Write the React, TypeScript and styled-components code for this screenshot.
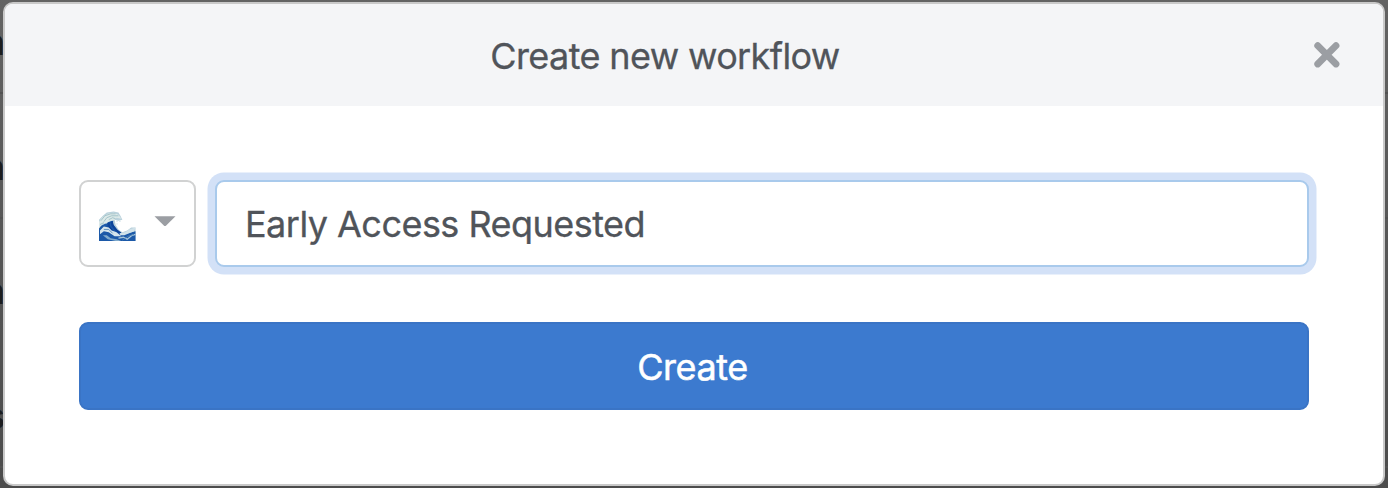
import React from "react";
import styled, { createGlobalStyle } from "styled-components";

const GlobalStyle = createGlobalStyle`
  * { box-sizing: border-box; }
  body { margin: 0; background: #5a5a5a; overflow: hidden; }
  body, button, input { font-family: Inter, "Liberation Sans", sans-serif; }
`;

const Page = styled.div`
  display: grid;
  grid-template: 488px / 1388px;
  background: linear-gradient(#636363, #565656 50%, #4c4c4c);
  overflow: hidden;
`;

const Backdrop = styled.div`
  grid-area: 1 / 1;
  display: flex;
  flex-direction: column;
  overflow: hidden;
`;

const BackdropRow = styled.div`
  flex: none;
  height: 124.5px;
  padding: 20px 0 0;
  background: linear-gradient(transparent 92px, #525252 92px, #525252 94px, transparent 94px);
`;

const BackdropLabel = styled.div`
  display: flex;
  justify-content: flex-end;
  width: 5px;
  overflow: hidden;
  color: #1c1d1f;
  font-size: 36px;
  font-weight: 600;
  line-height: 44px;
`;

const Dialog = styled.section`
  grid-area: 1 / 1;
  z-index: 1;
  display: flex;
  flex-direction: column;
  margin: 2px 3px 2px 3px;
  border: 2px solid #c9c9c9;
  border-radius: 10px;
  background: #fff;
  overflow: hidden;
`;

const Header = styled.header`
  display: flex;
  align-items: center;
  height: 102px;
  padding: 0 42px 0 0;
  background: #f4f5f7;
`;

const Title = styled.h1`
  flex: 1;
  margin: 0;
  padding: 2px 0 0 12px;
  color: #50545a;
  font-size: 36px;
  font-weight: 400;
  line-height: 44px;
  letter-spacing: -0.63px;
  text-align: center;
  -webkit-text-stroke: 0.3px currentColor;
`;

const CloseButton = styled.button`
  display: flex;
  padding: 0;
  border: 0;
  background: none;
`;

const Form = styled.form`
  display: flex;
  flex-direction: column;
  gap: 55px;
  padding: 74px 74px 0;
`;

const Fields = styled.div`
  display: flex;
  gap: 19px;
`;

const EmojiPicker = styled.button`
  display: flex;
  align-items: center;
  gap: 18px;
  width: 117px;
  height: 87px;
  padding: 5px 18px 0;
  border: 2px solid #d1d2d2;
  border-radius: 9px;
  background: #fff;
`;

const CaretWrap = styled.span`
  display: flex;
  margin-top: -10px;
`;

const NameInput = styled.input`
  flex: 1;
  min-width: 0;
  height: 87px;
  padding: 0 28px;
  border: 2px solid #a9caec;
  border-radius: 9px;
  outline: none;
  box-shadow: 0 0 0 7.5px #d3e1f7;
  color: #50545a;
  font-size: 36px;
  letter-spacing: -0.53px;
  -webkit-text-stroke: 0.3px currentColor;
`;

const SubmitButton = styled.button`
  height: 88px;
  padding: 2px 3px 0 0;
  border: 2px solid #3a74c5;
  border-radius: 9px;
  background: #3c7acf;
  color: #fff;
  font-size: 36px;
  letter-spacing: -0.45px;
  -webkit-text-stroke: 0.5px currentColor;
`;

const CloseIcon = () => (
  <svg width="28" height="28" viewBox="0 0 28 28">
    <path d="M4.7 4.7 23 23M23 4.7 4.7 23" stroke="#9b9ea3" strokeWidth="6.8" strokeLinecap="round" />
  </svg>
);

const Caret = () => (
  <svg width="22" height="11" viewBox="0 0 22 11">
    <path d="M.5.3h21L12.2 9.5Q11 10.6 9.8 9.5Z" fill="#9b9ea3" />
  </svg>
);

const WaveIcon = () => (
  <svg width="39" height="33" viewBox="0 0 38 32">
    <path d="M0 9 4 5 8 1.5 15 .5 20 1.5 22 5 24 9 20 10 16 9 17 14 20 19 24 22 29 20 33 17 37.5 17V31H0Z" fill="#b9d1dc" />
    <path d="M11 11 15 9 14 13 17 18 20 21 26 24 37.5 21V31H0V16L5 14 8 12Z" fill="#1c59a8" />
    <path d="M0 11 4 6 9 3 15 2 20 4 23 8 18 7 15 10 11 10 8 13 4 13 0 18Z" fill="#dce9e8" />
    <path d="M2 10 6 5 12 3 17 3M5 11 8 7 13 5 20 5M1 14 5 12M10 9 14 7 17 8" stroke="#94b9c1" strokeWidth=".8" fill="none" />
    <path d="M13 11 14 15 18 20 22 23M10 12 10 16 14 21" stroke="#0e449a" strokeWidth="2.4" fill="none" />
    <path d="M1 20 5 16 10 17 13 20 18 22 23 26 16 26 10 22 5 21 1 24Z" fill="#d5e5ec" />
    <path d="M21 23 27 22 31 19 37.5 17 36 21 31 23 26 25 22 25Z" fill="#d1e2e9" />
    <path d="M4 25 8 25 12 28 18 29 23 31H17L9 29Z" fill="#81abcc" />
    <path d="M20 28 25 27 29 29 34 25 37.5 24" stroke="#a6c5d9" strokeWidth="1.4" fill="none" />
    <path d="M5 19 10 19 14 23M24 30 30 26 36 24" stroke="#4f83b7" strokeWidth=".9" fill="none" />
    <path d="M18 10h1v1h-1zM21 10h1v1h-1zM18 13h1v1h-1z" fill="#b9d1dc" />
  </svg>
);

export default function App() {
  return (
    <>
      <GlobalStyle />
      <Page>
        <Backdrop aria-hidden="true">
          {["n", "n", "n", "s"].map((letter, index) => (
            <BackdropRow key={index}>
              <BackdropLabel>{letter}</BackdropLabel>
            </BackdropRow>
          ))}
        </Backdrop>
        <Dialog role="dialog" aria-label="Create new workflow">
          <Header>
            <Title>Create new workflow</Title>
            <CloseButton aria-label="Close"><CloseIcon /></CloseButton>
          </Header>
          <Form onSubmit={(event) => event.preventDefault()}>
            <Fields>
              <EmojiPicker type="button" aria-label="Choose emoji">
                <WaveIcon />
                <CaretWrap><Caret /></CaretWrap>
              </EmojiPicker>
              <NameInput defaultValue="Early Access Requested" aria-label="Workflow name" />
            </Fields>
            <SubmitButton type="submit">Create</SubmitButton>
          </Form>
        </Dialog>
      </Page>
    </>
  );
}
